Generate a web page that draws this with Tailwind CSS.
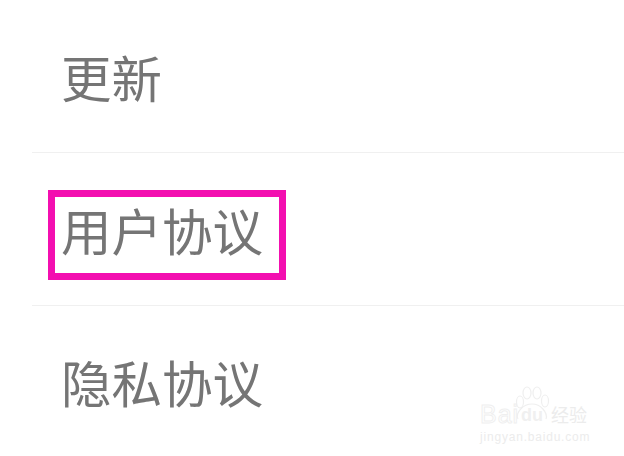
<!DOCTYPE html>
<html><head><script src="https://cdn.jsdelivr.net/npm/@tailwindcss/browser@4"></script></head>
<body class="m-0 bg-white">
<div class="relative w-[624px] h-[456px] overflow-hidden bg-white font-['Noto_Sans_CJK_SC','Noto_Sans',sans-serif] text-[#757575]">
  <div class="h-[153px] ml-[32px] border-b border-[#f0f0f0] flex items-center pl-[29px]"><span class="text-[50.5px] leading-none">更新</span></div>
  <div class="h-[153px] ml-[32px] border-b border-[#f0f0f0] flex items-center pl-[29px]"><span class="text-[50.5px] leading-none">用户协议</span></div>
  <div class="h-[150px] ml-[32px] flex items-center pl-[29px]"><span class="text-[50.5px] leading-none">隐私协议</span></div>
  <div class="absolute left-[48px] top-[190px] w-[238px] h-[90px] border-[7px] border-[#f30fb0]"></div>
  <div class="absolute left-[480px] top-[388px] w-[110px] h-[56px] text-white font-['Liberation_Sans',sans-serif]">
    <span class="absolute left-0 top-[14px] text-[25px] leading-[24px] tracking-[1px] [-webkit-text-stroke:1px_#efefef]">Bai</span>
    <span class="absolute left-[41px] top-[16px] text-[18px] leading-[22px] font-bold text-[#f0f0f0]">du</span>
    <svg class="absolute left-[34px] top-[-2px]" width="36" height="36" viewBox="0 0 36 36" fill="none" stroke="#efefef" stroke-width="1.2">
      <ellipse cx="6" cy="16" rx="3.5" ry="6"/><ellipse cx="13" cy="7" rx="4" ry="6"/><ellipse cx="23" cy="7" rx="4" ry="6"/><ellipse cx="31" cy="15" rx="3.5" ry="6"/>
      <path d="M4 33c-3-6 5-15 14-15s16 9 14 15"/>
    </svg>
    <span class="absolute left-[71px] top-[15px] text-[18px] leading-[22px] text-[#ececec] font-['Noto_Sans_CJK_SC',sans-serif] whitespace-nowrap">经验</span>
    <span class="absolute left-0 top-[42px] text-[12px] leading-[14px] tracking-[0.8px] text-[#ececec] whitespace-nowrap">jingyan.baidu.com</span>
  </div>
</div>
</body></html>
